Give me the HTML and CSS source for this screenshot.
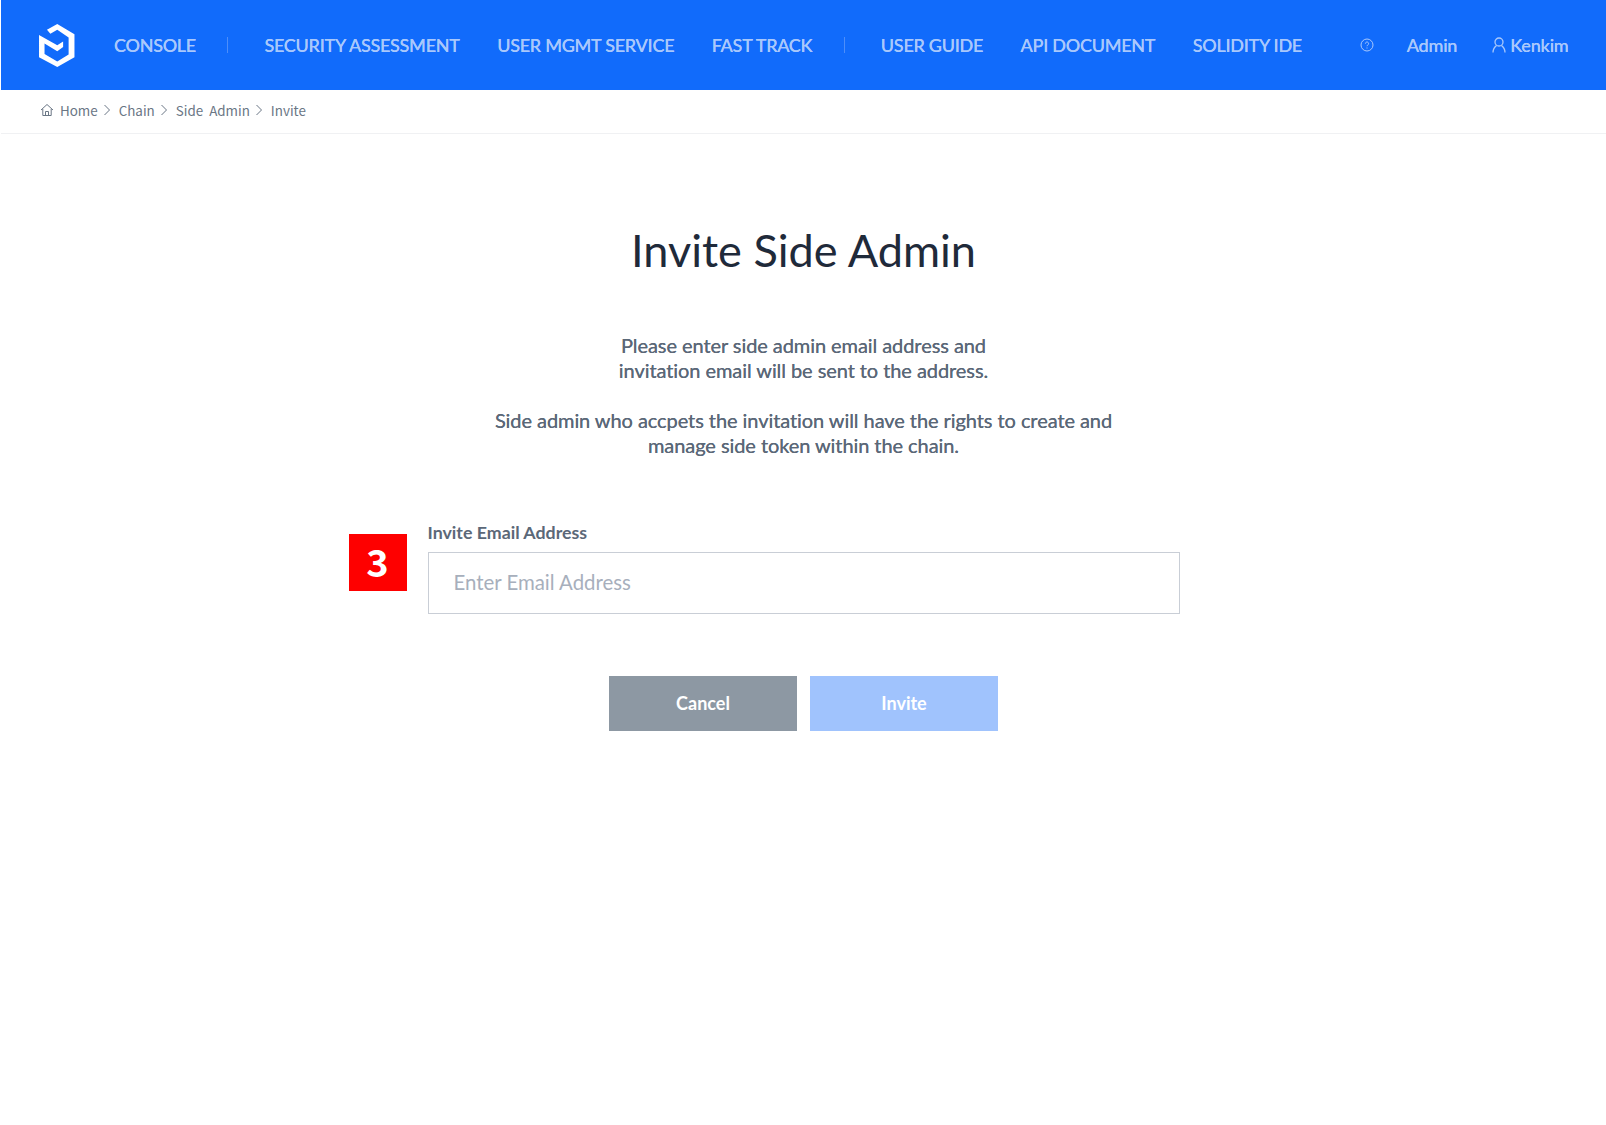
FILE: index.html
```html
<!DOCTYPE html>
<html lang="en">
<head>
<meta charset="utf-8">
<title>Invite Side Admin</title>
<link rel="stylesheet" href="styles.css">
</head>
<body>
<header class="topbar">
  <svg class="logo" viewBox="27 28 103 125"><path fill="#fff" d="M50 45 80 28 130 58V125L80 153 27 125V60L80 90 97 79V95L80 107 43 85V115L80 137 113 117V67L80 45 60 56Z"/></svg>
  <nav class="nav">
    <a class="nav-item">CONSOLE</a><span class="sep"></span>
    <a class="nav-item">SECURITY ASSESSMENT</a>
    <a class="nav-item">USER MGMT SERVICE</a>
    <a class="nav-item">FAST TRACK</a><span class="sep"></span>
    <a class="nav-item">USER GUIDE</a>
    <a class="nav-item">API DOCUMENT</a>
    <a class="nav-item">SOLIDITY IDE</a>
  </nav>
  <div class="account">
    <svg class="help" viewBox="0 0 14 14" fill="none" stroke="currentColor"><circle cx="7" cy="7" r="6"/><path d="M5.400 5.600a1.600 1.600 0 1 1 2.400 1.400c-.5.300-.8.600-.8 1.200M7 9.500v1"/></svg>
    <a class="account-item">Admin</a>
    <a class="account-item user"><svg class="user-icon" viewBox="0 0 14 16" fill="none" stroke="currentColor" stroke-width="1.300"><circle cx="7" cy="5" r="4"/><path d="M1 15.500c0-3.500 2-5.800 3.500-7M13 15.500c0-3.500-2-5.800-3.500-7"/></svg>Kenkim</a>
  </div>
</header>
<div class="crumbs">
  <svg class="home" viewBox="0 0 14 14" fill="none" stroke="currentColor"><path d="M1 7 7 1.500 13 7M2.800 6v6.500h8.400V6M5.500 12.500V8.500h3v4"/></svg>
  <span>Home</span><svg class="chev" viewBox="0 0 8 12" fill="none" stroke="currentColor"><path d="M1.500 1 6.500 6 1.500 11"/></svg>
  <span>Chain</span><svg class="chev" viewBox="0 0 8 12" fill="none" stroke="currentColor"><path d="M1.500 1 6.500 6 1.500 11"/></svg>
  <span>Side&nbsp; Admin</span><svg class="chev" viewBox="0 0 8 12" fill="none" stroke="currentColor"><path d="M1.500 1 6.500 6 1.500 11"/></svg>
  <span>Invite</span>
</div>
<main class="content">
  <h1 class="title">Invite Side Admin</h1>
  <p class="lead">Please enter side admin email address and<br>invitation email will be sent to the address.</p>
  <p class="lead second">Side admin who accpets the invitation will have the rights to create and<br>manage side token within the chain.</p>
  <div class="field-wrap">
    <span class="badge">3</span>
    <label class="label" for="email">Invite Email Address</label>
    <input class="input" id="email" type="text" placeholder="Enter Email Address">
  </div>
  <div class="actions">
    <button class="btn cancel">Cancel</button>
    <button class="btn invite">Invite</button>
  </div>
</main>
</body>
</html>
```
FILE: styles.css
```css
* { box-sizing: border-box; }
html, body { margin: 0; height: 100%; background: #fff; }
body { font-family: Lato, "Noto Sans", sans-serif; color: #1f2a3a; padding-left: 1px; overflow: hidden; }
.topbar { height: 90px; background: #116bfb; display: flex; align-items: center; padding: 0 37.500px 0 38px; color: #a9c8fb; font-size: 18px; }
.logo { width: 35.500px; height: 43px; flex: none; }
.nav { display: flex; align-items: center; margin-left: 39.500px; padding-bottom: 1px; }
.nav-item { margin-right: 37.500px; font-weight: 500; letter-spacing: -.27px; white-space: nowrap; text-shadow: 0 0 .4px currentColor; }
.sep { width: 1px; height: 16px; background: #4d8efa; margin: 0 36px 0 -6px; }
.account { margin-left: auto; display: flex; align-items: center; padding-bottom: 1px; }
.help { width: 14px; height: 14px; margin-right: 32.500px; }
.account-item { font-weight: 500; white-space: nowrap; letter-spacing: -.2px; text-shadow: 0 0 .4px currentColor; }
.user { margin-left: 35px; display: flex; align-items: center; }
.user-icon { width: 14px; height: 16px; margin-right: 4px; }
.crumbs { height: 44px; display: flex; align-items: center; padding: 0 0 4px 39px; border-bottom: 1px solid #f0f1f3; font-family: "Noto Sans CJK KR", "Noto Sans", sans-serif; font-size: 13.400px; color: #6a7685; }
.home { width: 14px; height: 14px; margin-right: 6px; }
.chev { width: 8px; height: 12px; margin: 0 8px 0 5px; }
.content { display: flex; flex-direction: column; align-items: center; }
.title { margin: 86.500px 0 0; font-size: 45.100px; line-height: 58px; font-weight: 400; color: #1f2a3a; }
.lead { margin: 0; font-size: 20px; line-height: 25px; text-align: center; color: #5b6878; letter-spacing: -.07px; text-shadow: 0 0 .3px currentColor; }
.lead:first-of-type { margin-top: 54.500px; }
.second { margin-top: 25px; }
.field-wrap { position: relative; width: 752px; margin-top: 62.500px; }
.badge { position: absolute; left: -79px; top: 13px; width: 58px; height: 57px; padding-bottom: 3px; background: #fe0000; color: #fff; font-family: "Noto Sans CJK KR", sans-serif; font-weight: 700; font-size: 38px; display: flex; align-items: center; justify-content: center; }
.label { display: block; font-size: 17.800px; line-height: 22px; font-weight: 700; color: #5b6878; margin-bottom: 9px; }
.input { display: block; width: 100%; height: 62px; border: 1px solid #c9ced6; padding: 0 25px 2px; font: 400 20.400px Lato, sans-serif; outline: none; }
.input::placeholder { color: #a7afbc; opacity: 1; }
.actions { display: flex; gap: 13px; margin-top: 62.500px; }
.btn { width: 188px; height: 55px; padding: 0 0 2px; border: 0; color: #fff; font: 700 18px Lato, sans-serif; }
.cancel { background: #8d98a3; }
.invite { background: #a0c3fd; }
```
